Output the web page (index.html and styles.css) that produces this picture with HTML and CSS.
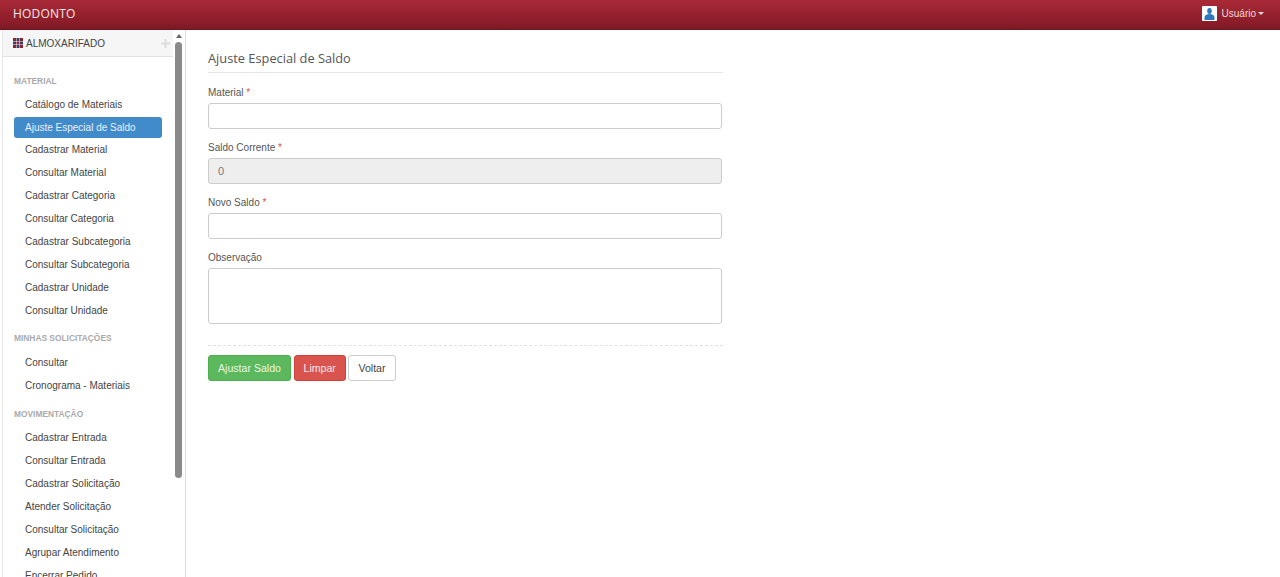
FILE: index.html
```html
<!DOCTYPE html>
<html lang="pt-BR">
<head>
<meta charset="utf-8">
<title>HODONTO</title>
<link rel="stylesheet" href="styles.css">
</head>
<body>
<header class="navbar">
  <a class="brand">HODONTO</a>
  <div class="user">
    <span class="avatar"><svg width="15" height="15" viewBox="0 0 15 15"><rect width="15" height="15" rx="1" fill="#fff"/><ellipse cx="7.500" cy="5" rx="2.300" ry="3" fill="#2f78bd"/><path d="M2.500 14v-2.500C2.500 9.500 4.500 8 7.500 8s5 1.500 5 3.500V14z" fill="#2f78bd"/></svg></span>
    <span>Usuário</span><span class="caret"></span>
  </div>
</header>
<div class="layout">
  <aside class="sidebar">
    <div class="side-main">
      <div class="side-head">
        <svg class="grid-ic" width="10" height="10" viewBox="0 0 10 10"><path d="M0 0h3v3H0zM7 0h3v3H7zM3.500 3.500h3v3h-3zM0 7h3v3H0zM7 7h3v3H7z" fill="#8c2430"/><path d="M3.500 0h3v3h-3zM0 3.500h3v3H0zM7 3.500h3v3H7zM3.500 7h3v3h-3z" fill="#3c3f6e"/></svg>
        <span class="side-title">ALMOXARIFADO</span>
        <svg class="plus-ic" width="9" height="9" viewBox="0 0 9 9"><path d="M3.500 0h2v3.500H9v2H5.500V9h-2V5.500H0v-2h3.500z" fill="#dcdcdc"/></svg>
      </div>
      <nav class="menu">
        <h4 class="group">MATERIAL</h4>
        <a class="item">Catálogo de Materiais</a>
        <a class="item active">Ajuste Especial de Saldo</a>
        <a class="item">Cadastrar Material</a>
        <a class="item">Consultar Material</a>
        <a class="item">Cadastrar Categoria</a>
        <a class="item">Consultar Categoria</a>
        <a class="item">Cadastrar Subcategoria</a>
        <a class="item">Consultar Subcategoria</a>
        <a class="item">Cadastrar Unidade</a>
        <a class="item">Consultar Unidade</a>
        <h4 class="group">MINHAS SOLICITAÇÕES</h4>
        <a class="item">Consultar</a>
        <a class="item">Cronograma - Materiais</a>
        <h4 class="group">MOVIMENTAÇÃO</h4>
        <a class="item">Cadastrar Entrada</a>
        <a class="item">Consultar Entrada</a>
        <a class="item">Cadastrar Solicitação</a>
        <a class="item">Atender Solicitação</a>
        <a class="item">Consultar Solicitação</a>
        <a class="item">Agrupar Atendimento</a>
        <a class="item">Encerrar Pedido</a>
      </nav>
    </div>
    <div class="scrollbar">
      <span class="arrow"></span>
      <span class="thumb"></span>
    </div>
  </aside>
  <main class="content">
    <form class="form">
      <h2 class="title">Ajuste Especial de Saldo</h2>
      <div class="field">
        <label class="label">Material <span class="req">*</span></label>
        <input class="input" type="text">
      </div>
      <div class="field">
        <label class="label">Saldo Corrente <span class="req">*</span></label>
        <input class="input disabled" type="text" value="0" disabled>
      </div>
      <div class="field">
        <label class="label">Novo Saldo <span class="req">*</span></label>
        <input class="input" type="text">
      </div>
      <div class="field">
        <label class="label">Observação</label>
        <textarea class="input area"></textarea>
      </div>
      <div class="actions">
        <button class="btn green" type="button">Ajustar Saldo</button>
        <button class="btn red" type="button">Limpar</button>
        <button class="btn plain" type="button">Voltar</button>
      </div>
    </form>
  </main>
</div>
</body>
</html>
```
FILE: styles.css
```css
* { box-sizing: border-box; }
html, body { margin: 0; height: 577px; overflow: hidden; }
body { font-family: "Liberation Sans", Arial, sans-serif; font-size: 10px; color: #555; background: #fff; display: flex; flex-direction: column; }

.navbar { height: 30px; flex: none; display: flex; align-items: center; justify-content: space-between; padding: 0 16px 0 13px; background: linear-gradient(#a92a37, #8c1d29 75%, #7c1a24); border-bottom: 1px solid #6f141e; color: #fff; }
.brand { font-family: "Open Sans", sans-serif; font-size: 12px; color: #f4e6e7; letter-spacing: .2px; padding-bottom: 2px; }
.user { display: flex; align-items: center; color: #f0d8da; font-size: 10px; padding-bottom: 2px; }
.avatar { display: flex; margin-right: 5px; }
.caret { width: 0; height: 0; margin-left: 2px; border: 3.500px solid transparent; border-top-color: #f0d8da; border-bottom: 0; }

.layout { flex: 1; display: flex; min-height: 0; }
.sidebar { width: 184px; flex: none; margin-left: 2px; display: flex; border-left: 1px solid #e6e6e6; border-right: 1px solid #dcdcdc; background: #fff; overflow: hidden; }
.side-main { width: 170px; flex: none; }
.side-head { height: 27px; display: flex; align-items: center; padding: 0 0 0 10px; background: #f6f6f6; border-bottom: 1px solid #e2e2e2; }
.grid-ic { margin-right: 3px; }
.side-title { color: #444; font-size: 10px; flex: 1; }
.plus-ic { margin-right: 3px; }

.menu { display: flex; flex-direction: column; padding-top: 19px; }
.group { margin: 11px 0 0; height: 18.500px; padding-left: 11px; font-size: 8.400px; line-height: 10px; font-weight: bold; color: #aaa; }
.group:first-child { margin-top: 0; height: 17.500px; }
.item { height: 22.900px; line-height: 22.900px; padding-left: 22px; color: #444; font-size: 10px; flex: none; }
.item.active { width: 148px; height: 21px; line-height: 21px; margin: 1px 0 .900px 11px; padding-left: 11px; background: #428bca; border-radius: 3px; color: #e8f0f8; }

.scrollbar { width: 11px; flex: none; display: flex; flex-direction: column; align-items: center; background: #fff; }
.arrow { margin-top: 4px; width: 0; height: 0; border: 3.500px solid transparent; border-bottom: 4px solid #666; border-top: 0; }
.thumb { width: 7px; height: 436px; margin-top: 4px; background: #8a8a8a; border-radius: 4px; }

.content { flex: 1; min-width: 0; padding: 0 0 0 22px; }
.form { width: 515px; }
.title { margin: 0; height: 43px; padding-top: 19px; font-family: "Open Sans", sans-serif; font-size: 12.800px; line-height: 18px; font-weight: 400; color: #555; border-bottom: 1px solid #e8e8e8; }
.field { display: flex; flex-direction: column; width: 514px; margin-top: 12px; }
.title + .field { margin-top: 13px; }
.label { height: 17px; line-height: 13px; color: #555; font-size: 10px; }
.req { color: #d9534f; }
.input { display: block; width: 100%; height: 26px; padding: 0 9px; border: 1px solid #ccc; border-radius: 3px; background: #fff; font-family: "Liberation Sans", Arial, sans-serif; font-size: 11px; color: #777; outline: 0; }
.input.disabled { background: #eee; }
.area { height: 56px; resize: none; }
.actions { display: flex; gap: 2.500px; margin-top: 21px; padding-top: 9px; border-top: 1px dashed #e0e0e0; }
.btn { height: 26px; padding: 0 9px; border: 1px solid transparent; border-radius: 3px; font-family: "Liberation Sans", Arial, sans-serif; font-size: 10.600px; color: #fff; }
.green { background: #5cb85c; border-color: #4cae4c; color: #e9f6e9; }
.red { background: #d9534f; border-color: #d43f3a; color: #fbe9e8; }
.plain { background: #fff; border-color: #ccc; color: #444; }
```
